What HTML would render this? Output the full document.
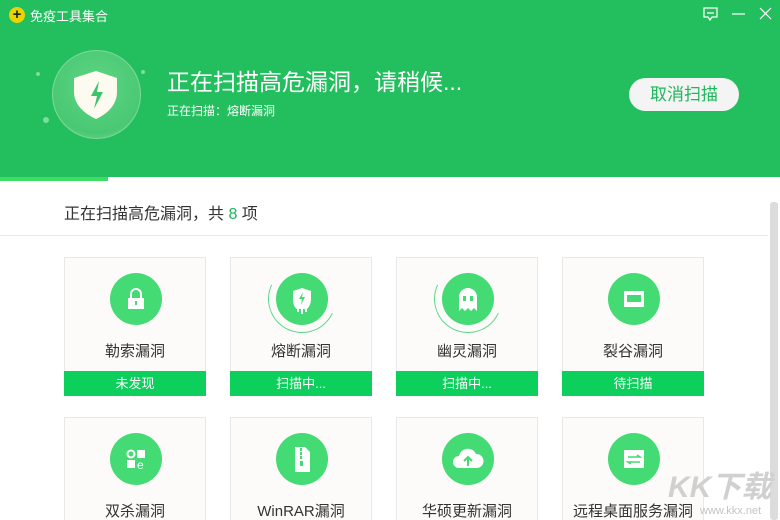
<!DOCTYPE html>
<html><head><meta charset="utf-8"><style>
*{margin:0;padding:0;box-sizing:border-box}
html,body{width:780px;height:520px;overflow:hidden}
body{background:#fff;font-family:"Liberation Sans","Noto Sans CJK SC",sans-serif;position:relative}
.hd{position:absolute;left:0;top:0;width:780px;height:177px;background:#23bf5e}
.prog{position:absolute;left:0;top:177px;width:108px;height:4px;background:#3ddc62}
.t{position:absolute;color:#fff}
.btn{position:absolute;left:629px;top:78px;width:110px;height:33px;border-radius:17px;background:#f4f4f4;color:#1cb85a;font-size:17px;text-align:center;line-height:33px}
.sub{position:absolute;left:64px;top:200px;font-size:16px;color:#333}
.line{position:absolute;left:0;top:235px;width:768px;height:1px;background:#e8e8e8}
.sb{position:absolute;left:770px;top:202px;width:8px;height:318px;background:#dcdcdc;border-radius:3px}
.card{position:absolute;width:142px;height:139px;background:#fcfbfa;border:1px solid #e8e8e8}
.ic{position:absolute;left:45px;top:15px;width:52px;height:52px;border-radius:50%;background:#44da74}
.lb{position:absolute;left:0;top:82px;width:100%;text-align:center;font-size:15px;color:#333}
.st{position:absolute;left:-1px;top:113px;width:142px;height:25px;background:#0ccf5c;color:#fff;font-size:13px;text-align:center;line-height:25px}
.ring{position:absolute;left:37px;top:7px;width:68px;height:68px;border-radius:50%;border:1.5px solid #5ad98a;border-top-color:transparent;border-right-color:transparent;transform:rotate(-20deg)}
.ic svg{position:absolute;left:0;top:0}
</style></head><body>
<div class="hd"></div>
<div class="prog"></div>
<div style="position:absolute;left:9px;top:7px;width:16px;height:16px;border-radius:50%;background:#e9d400;color:#222;font-size:15px;font-weight:bold;line-height:15px;text-align:center">+</div>
<div class="t" style="left:30px;top:6px;font-size:13px">免疫工具集合</div>
<svg style="position:absolute;left:700px;top:6px" width="72" height="16" viewBox="0 0 72 16" fill="none" stroke="#fff" stroke-width="1.2"><path d="M4 2h13v9h-5l-2 3-2-3H4z M7 7h7"/><path d="M32 8h13"/><path d="M60 2l11 11M71 2L60 13"/></svg>
<div style="position:absolute;left:52px;top:50px;width:89px;height:89px;border-radius:50%;background:radial-gradient(circle at 50% 40%,#5fd583,#49c873 70%,#8fdca0);border:1px solid #7fd99a"></div>
<div style="position:absolute;left:36px;top:72px;width:4px;height:4px;border-radius:50%;background:#7fdc9c"></div>
<div style="position:absolute;left:43px;top:117px;width:6px;height:6px;border-radius:50%;background:#7fdc9c"></div>
<div style="position:absolute;left:141px;top:70px;width:4px;height:4px;border-radius:50%;background:#7fdc9c"></div>
<svg style="position:absolute;left:73px;top:70px" width="46" height="50" viewBox="0 0 46 50"><path d="M23 1L44 8v14c0 13-10 22-21 27C12 44 1 35 1 22V8z" fill="#fdfaf0"/><path d="M26 11l-8 15h6l-3 13 9-17h-6z" fill="#3cc46c"/></svg>
<div class="t" style="left:167px;top:63px;font-size:23px">正在扫描高危漏洞，请稍候...</div>
<div class="t" style="left:167px;top:102px;font-size:12px">正在扫描：熔断漏洞</div>
<div class="btn">取消扫描</div>
<div class="sub">正在扫描高危漏洞，共 <span style="color:#1cb85a">8</span> 项</div>
<div class="line"></div>
<div class="sb"></div>

<div class="card" style="left:64px;top:257px"><div class="ic"><svg width="52" height="52"><path d="M21 25v-4a5 5 0 0110 0v4" stroke="#fff" stroke-width="2" fill="none"/><rect x="18" y="25" width="16" height="11" fill="#fff"/><rect x="25" y="28" width="2" height="4" fill="#44da74"/></svg></div><div class="lb">勒索漏洞</div><div class="st">未发现</div></div>
<div class="card" style="left:230px;top:257px"><div class="ring"></div><div class="ic"><svg width="52" height="52"><path d="M26 15l9 3v8c0 6-3 9-4 10v3h-2v-3h-2v5h-2v-5h-2v3h-2v-3c-2-1-4-4-4-10v-8z" fill="#fff"/><path d="M27 19l-4 7h3l-1 6 4-8h-3z" fill="#44da74"/></svg></div><div class="lb">熔断漏洞</div><div class="st">扫描中...</div></div>
<div class="card" style="left:396px;top:257px"><div class="ring"></div><div class="ic"><svg width="52" height="52"><path d="M17 38V24a9 9 0 0118 0v14l-3-3-3 3-3-3-3 3-3-3z" fill="#fff"/><rect x="21" y="23" width="3" height="5" fill="#44da74"/><rect x="28" y="23" width="3" height="5" fill="#44da74"/></svg></div><div class="lb">幽灵漏洞</div><div class="st">扫描中...</div></div>
<div class="card" style="left:562px;top:257px"><div class="ic"><svg width="52" height="52"><rect x="16" y="18" width="20" height="16" fill="#fff"/><rect x="19" y="22" width="14" height="7" fill="#44da74"/></svg></div><div class="lb">裂谷漏洞</div><div class="st">待扫描</div></div>

<div class="card" style="left:64px;top:417px"><div class="ic"><svg width="52" height="52"><circle cx="21" cy="21" r="3.5" stroke="#fff" stroke-width="2" fill="none"/><rect x="27" y="17" width="8" height="8" fill="#fff"/><rect x="17" y="27" width="8" height="8" fill="#fff"/><text x="27" y="36" font-size="12" fill="#fff" font-family="Liberation Sans">e</text></svg></div><div class="lb">双杀漏洞</div></div>
<div class="card" style="left:230px;top:417px"><div class="ic"><svg width="52" height="52"><path d="M19 14h10l5 5v20H19z" fill="#fff"/><path d="M24 15h2v3h-2zM24 19h2v3h-2zM24 23h2v3h-2zM24 28h3v5h-3z" fill="#44da74"/></svg></div><div class="lb">WinRAR漏洞</div></div>
<div class="card" style="left:396px;top:417px"><div class="ic"><svg width="52" height="52"><path d="M17 35a6 6 0 010-12 9 9 0 0117-2 7 7 0 011 14z" fill="#fff"/><path d="M26 33v-8M22 28l4-4 4 4" stroke="#44da74" stroke-width="2" fill="none"/></svg></div><div class="lb">华硕更新漏洞</div></div>
<div class="card" style="left:562px;top:417px"><div class="ic"><svg width="52" height="52"><rect x="16" y="17" width="20" height="18" fill="#fff"/><path d="M20 24h12l-3-2M32 29H20l3 2" stroke="#44da74" stroke-width="1.6" fill="none"/></svg></div><div class="lb">远程桌面服务漏洞</div></div>
<div style="position:absolute;left:668px;top:462px;font-size:30px;font-weight:bold;color:#d0d0d0;font-style:italic">KK下载</div>
<div style="position:absolute;left:700px;top:505px;font-size:11px;color:#c4c4c4">www.kkx.net</div>
</body></html>
